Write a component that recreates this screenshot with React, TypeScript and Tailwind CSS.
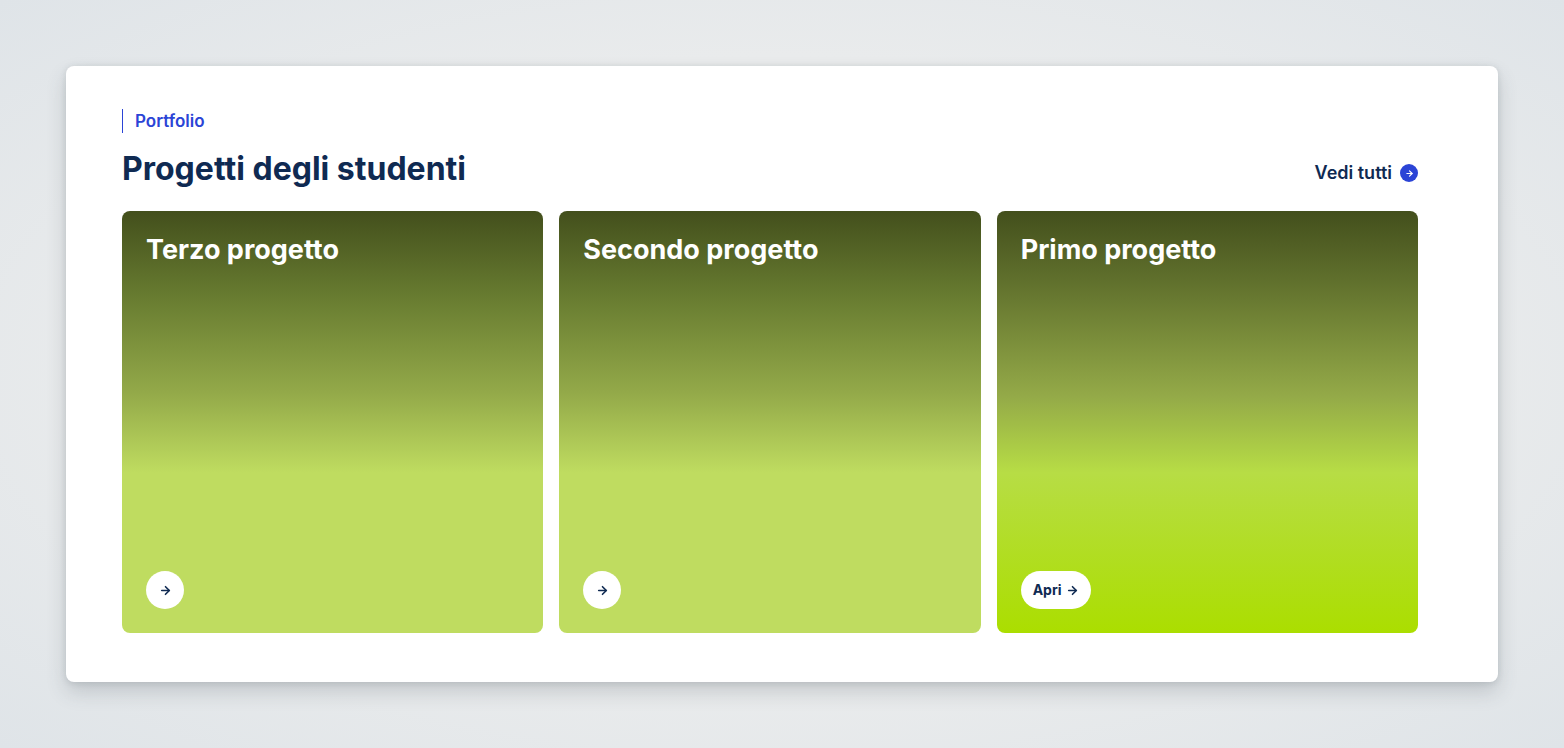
import { ArrowRight } from 'lucide-react';

type Project = {
    title: string;
    featured?: boolean;
};

const projects: Project[] = [
    { title: 'Terzo progetto' },
    { title: 'Secondo progetto' },
    { title: 'Primo progetto', featured: true },
];

const ProjectCard = ({ title, featured }: Project) => (
    <article
        className={`flex aspect-[421/422] flex-col items-start justify-between rounded-lg p-6 ${
            featured
                ? 'bg-[linear-gradient(180deg,#434f1c_0%,#5f6f2c_16%,#94aa48_44%,#b7dd45_62%,#abde00_100%)]'
                : 'bg-[linear-gradient(180deg,#434f1c_0%,#677b30_20%,#93a949_43%,#bfdc60_62%,#bfdc60_100%)]'
        }`}
    >
        <h3 className="text-[27px] leading-[30px] font-bold text-white">{title}</h3>
        {featured ? (
            <a href="#primo-progetto" className="flex h-[38px] items-center gap-1 rounded-full bg-white px-3 text-sm font-bold text-[#0f2a52]">
                Apri
                <ArrowRight size={13} strokeWidth={3} />
            </a>
        ) : (
            <button type="button" aria-label={`Apri ${title}`} className="flex size-[38px] items-center justify-center rounded-full bg-white text-[#0f2a52]">
                <ArrowRight size={13} strokeWidth={3} />
            </button>
        )}
    </article>
);

export default function App() {
    return (
        <main className="min-h-screen bg-[#e7eaec] bg-[radial-gradient(ellipse_at_center,#ececed_0%,#e9ebec_60%,#dfe4e8_100%)] p-[66px] font-['Inter',sans-serif] text-[#0f2a52]">
            <section className="rounded-lg bg-white pt-[43px] pr-20 pb-[49px] pl-14 shadow-[0_10px_20px_rgba(60,70,80,0.20),0_1px_6px_rgba(60,70,80,0.14)]">
                <p className="border-l border-[#2b44d6] pl-3 text-[17px] leading-6 font-semibold text-[#2b44d6]">Portfolio</p>
                <div className="mt-4 mb-[22px] flex items-end justify-between">
                    <h2 className="text-[32px] leading-10 font-bold">Progetti degli studenti</h2>
                    <a href="#progetti" className="mb-1 flex items-center gap-2 text-lg leading-6 font-semibold">
                        Vedi tutti
                        <span className="flex size-[18px] items-center justify-center rounded-full bg-[#2b44d6] text-white">
                            <ArrowRight size={9} strokeWidth={3} />
                        </span>
                    </a>
                </div>
                <div className="grid grid-cols-3 gap-4">
                    {projects.map(project => (
                        <ProjectCard key={project.title} {...project} />
                    ))}
                </div>
            </section>
        </main>
    );
}
